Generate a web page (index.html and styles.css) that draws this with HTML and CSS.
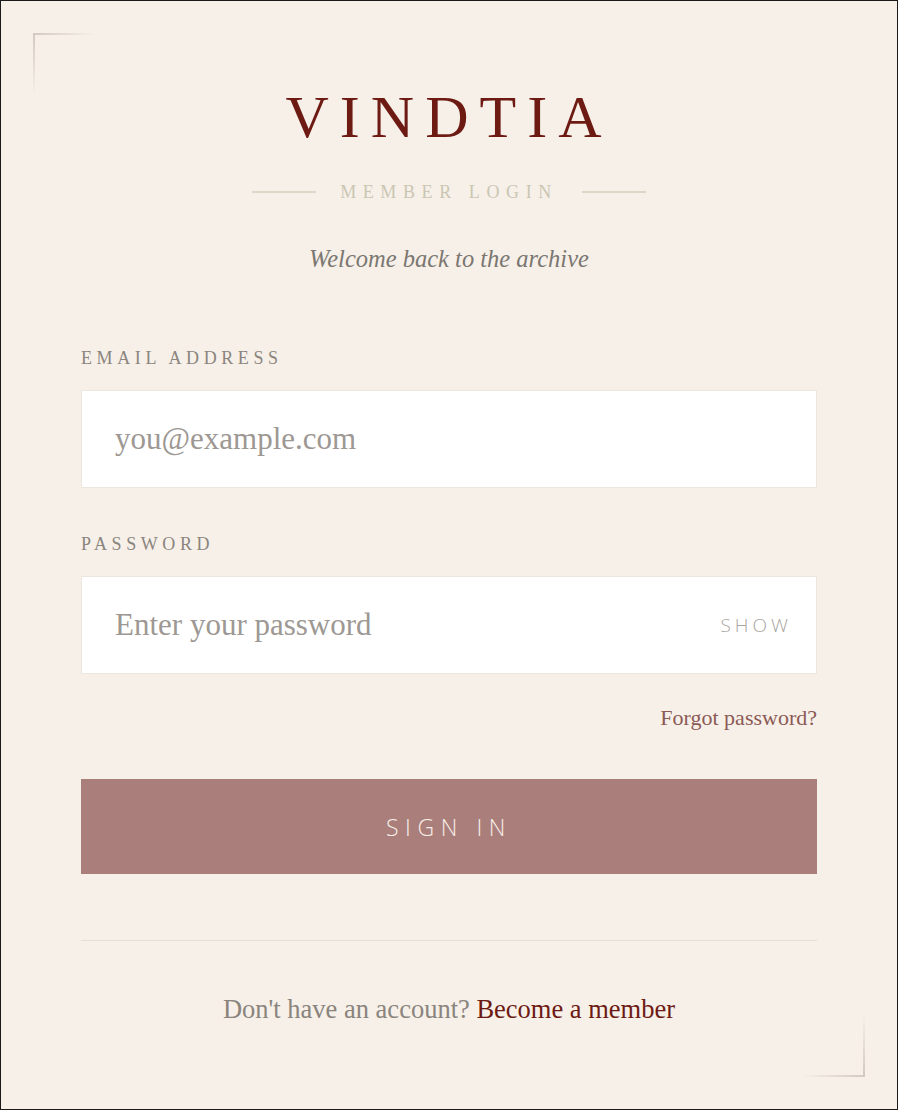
FILE: index.html
```html
<!DOCTYPE html>
<html lang="en">
<head>
<meta charset="utf-8">
<title>Vindtia — Member Login</title>
<link rel="stylesheet" href="styles.css">
</head>
<body>
<main class="card">
  <span class="corner corner-tl" aria-hidden="true"></span>
  <span class="corner corner-br" aria-hidden="true"></span>

  <header class="brand">
    <h1 class="brand-name">VINDTIA</h1>
    <div class="brand-sub">
      <span class="rule"></span>
      <span class="brand-tag">MEMBER LOGIN</span>
      <span class="rule"></span>
    </div>
    <p class="welcome">Welcome back to the archive</p>
  </header>

  <form class="login" onsubmit="return false">
    <label class="field-label" for="email">EMAIL ADDRESS</label>
    <div class="field">
      <input id="email" class="field-input" type="email" placeholder="you@example.com">
    </div>

    <label class="field-label field-label-next" for="password">PASSWORD</label>
    <div class="field">
      <input id="password" class="field-input" type="password" placeholder="Enter your password">
      <button type="button" class="show-toggle">SHOW</button>
    </div>

    <div class="forgot-row">
      <a href="#" class="forgot">Forgot password?</a>
    </div>

    <button type="submit" class="submit">SIGN IN</button>
  </form>

  <div class="divider"></div>

  <p class="signup">Don't have an account? <a href="#" class="signup-link">Become a member</a></p>
</main>
</body>
</html>
```

FILE: styles.css
```css
* {
  box-sizing: border-box;
}

html, body {
  margin: 0;
  padding: 0;
  background: #f6f0e9;
}

.card {
  position: relative;
  width: 898px;
  height: 1110px;
  border: 1px solid #1c1a19;
  background: #f6f0e9;
  padding: 86px 80px 0;
  display: flex;
  flex-direction: column;
  font-family: "Liberation Serif", "Times New Roman", serif;
}

/* decorative corner brackets */
.corner {
  position: absolute;
  width: 62px;
  height: 62px;
  pointer-events: none;
}

.corner::before,
.corner::after {
  content: "";
  position: absolute;
}

.corner-tl {
  top: 32px;
  left: 32px;
}

.corner-tl::before {
  top: 0;
  left: 0;
  width: 100%;
  height: 2px;
  background: linear-gradient(to right, #d3c9c0, rgba(211, 201, 192, 0));
}

.corner-tl::after {
  top: 0;
  left: 0;
  width: 2px;
  height: 100%;
  background: linear-gradient(to bottom, #d3c9c0, rgba(211, 201, 192, 0));
}

.corner-br {
  bottom: 32px;
  right: 32px;
}

.corner-br::before {
  bottom: 0;
  right: 0;
  width: 100%;
  height: 2px;
  background: linear-gradient(to left, #d3c9c0, rgba(211, 201, 192, 0));
}

.corner-br::after {
  bottom: 0;
  right: 0;
  width: 2px;
  height: 100%;
  background: linear-gradient(to top, #d3c9c0, rgba(211, 201, 192, 0));
}

/* brand header */
.brand {
  display: flex;
  flex-direction: column;
  align-items: center;
}

.brand-name {
  margin: 0;
  font-size: 60px;
  line-height: 60px;
  font-weight: 400;
  letter-spacing: 11px;
  color: #6d1a13;
}

.brand-sub {
  margin-top: 35px;
  display: flex;
  align-items: center;
  gap: 24px;
  height: 20px;
}

.rule {
  width: 64px;
  height: 2px;
  background: #dcd7c6;
}

.brand-tag {
  font-size: 18px;
  line-height: 20px;
  letter-spacing: 6.6px;
  color: #cbc6b2;
}

.welcome {
  margin: 42px 0 0;
  font-size: 24.5px;
  line-height: 30px;
  font-style: italic;
  color: #7b7771;
}

/* form */
.login {
  display: flex;
  flex-direction: column;
  margin-top: 74px;
}

.field-label {
  font-size: 18px;
  line-height: 20px;
  letter-spacing: 4.6px;
  color: #8b857e;
}

.field-label-next {
  margin-top: 46px;
}

.field {
  margin-top: 22px;
  height: 98px;
  display: flex;
  align-items: center;
  background: #ffffff;
  border: 1px solid #ebe6de;
}

.field-input {
  flex: 1;
  min-width: 0;
  height: 100%;
  border: 0;
  outline: none;
  background: transparent;
  padding: 0 0 0 33px;
  font-family: "Liberation Serif", "Times New Roman", serif;
  font-size: 31px;
  color: #4a4540;
}

.field-input::placeholder {
  color: #9d9893;
}

.show-toggle {
  border: 0;
  background: transparent;
  padding: 0 24px 0 16px;
  font-family: "Open Sans", "Liberation Sans", sans-serif;
  font-weight: 300;
  font-size: 19px;
  letter-spacing: 4px;
  color: #a9a5a1;
  cursor: pointer;
}

.forgot-row {
  margin-top: 31px;
  display: flex;
  justify-content: flex-end;
  line-height: 26px;
}

.forgot {
  font-size: 22px;
  color: #8c5a55;
  text-decoration: none;
}

.submit {
  margin-top: 48px;
  height: 95px;
  border: 0;
  background: #aa7f7b;
  color: #f7eee8;
  font-family: "Open Sans", "Liberation Sans", sans-serif;
  font-weight: 300;
  font-size: 23px;
  letter-spacing: 6.6px;
  padding-left: 6px;
  cursor: pointer;
}

.divider {
  margin-top: 66px;
  height: 1px;
  background: #e5ded3;
}

.signup {
  margin: 53px 0 0;
  text-align: center;
  font-size: 26.5px;
  line-height: 30px;
  color: #8a847d;
}

.signup-link {
  color: #6d1a13;
  text-decoration: none;
}
```
